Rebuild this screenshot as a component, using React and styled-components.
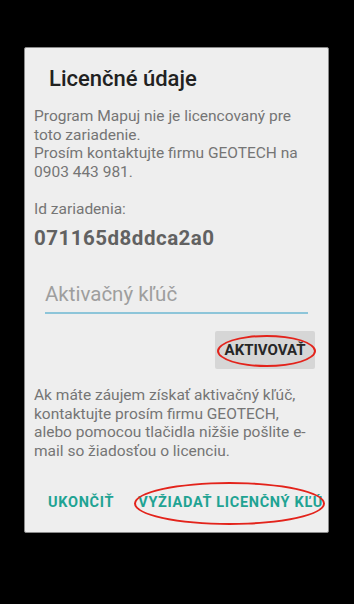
import React from "react";
import styled, { createGlobalStyle } from "styled-components";

const Global = createGlobalStyle`
  html, body { margin: 0; padding: 0; background: #000; }
  body { width: 354px; height: 604px; overflow: hidden; font-family: Roboto, "Noto Sans", sans-serif; }
`;

const Screen = styled.div`
  width: 354px;
  height: 604px;
  background: #000;
  padding: 47px 0 0 24px;
  box-sizing: border-box;
`;

const Dialog = styled.div`
  width: 305px;
  height: 486px;
  box-sizing: border-box;
  background: #eeeeee;
  border: 1px solid #8a8a8a;
  border-radius: 2px;
  display: flex;
  flex-direction: column;
  overflow: hidden;
`;

const Title = styled.h1`
  margin: 0;
  padding: 18px 0 0 24px;
  font-family: Roboto, sans-serif;
  font-weight: 500;
  font-size: 22px;
  line-height: 26px;
  color: #212121;
`;

const Body = styled.div`
  padding: ${(p) => p.$top || 0}px 0 0 9px;
  display: flex;
  flex-direction: column;
`;

const Para = styled.p`
  margin: ${(p) => p.$gap || 0}px 0 0 0;
  font-size: 15.5px;
  line-height: 18.6px;
  color: #757575;
  white-space: nowrap;
`;

const DeviceId = styled.div`
  margin-top: 7px;
  font-size: 20.5px;
  line-height: 24px;
  font-weight: 700;
  letter-spacing: 0.5px;
  color: #616161;
`;

const Field = styled.div`
  margin: 32px 0 0 20px;
  width: 263px;
  border-bottom: 2px solid #8dc5d9;
  padding-bottom: 6.5px;
`;

const Placeholder = styled.div`
  font-size: 20.5px;
  line-height: 24px;
  color: #9e9e9e;
`;

const ActivateRow = styled.div`
  display: flex;
  justify-content: flex-end;
  padding: 16.5px 13px 0 0;
`;

const GrayButton = styled.div`
  position: relative;
  width: 100px;
  height: 38px;
  box-sizing: border-box;
  background: #d6d6d6;
  border-radius: 2px;
  display: flex;
  align-items: center;
  justify-content: center;
  font-size: 15px;
  font-weight: 700;
  color: #262626;
`;

const Mark = styled.div`
  position: absolute;
  box-sizing: border-box;
  border: 2px solid #e3231b;
  border-radius: 50%;
  pointer-events: none;
`;

const Actions = styled.div`
  margin-top: auto;
  display: flex;
  align-items: center;
  padding: 0 0 20px 23px;
  white-space: nowrap;
`;

const TextButton = styled.div`
  position: relative;
  font-size: 14.5px;
  line-height: 18px;
  font-weight: 700;
  letter-spacing: 0.7px;
  color: #1fa393;
  margin-right: ${(p) => p.$mr || 0}px;
  flex: 0 0 auto;
`;

const Clip = styled.span`
  display: block;
  overflow: hidden;
  max-width: 185px;
`;

export default function App() {
  return (
    <>
      <Global />
      <Screen>
        <Dialog>
          <Title>Licenčné údaje</Title>
          <Body $top={15}>
            <Para>
              Program Mapuj nie je licencovaný pre
              <br />
              toto zariadenie.
              <br />
              Prosím kontaktujte firmu GEOTECH na
              <br />
              0903 443 981.
            </Para>
            <Para $gap={18.6}>Id zariadenia:</Para>
            <DeviceId>071165d8ddca2a0</DeviceId>
          </Body>
          <Field>
            <Placeholder>Aktivačný kľúč</Placeholder>
          </Field>
          <ActivateRow>
            <GrayButton>
              AKTIVOVAŤ
              <Mark style={{ left: 2, top: 4, width: 99, height: 32 }} />
            </GrayButton>
          </ActivateRow>
          <Body $top={17.4}>
            <Para>
              Ak máte záujem získať aktivačný kľúč,
              <br />
              kontaktujte prosím firmu GEOTECH,
              <br />
              alebo pomocou tlačidla nižšie pošlite e-
              <br />
              mail so žiadosťou o licenciu.
            </Para>
          </Body>
          <Actions>
            <TextButton $mr={24}>UKONČIŤ</TextButton>
            <TextButton>
              <Clip>VYŽIADAŤ LICENČNÝ KĽÚČ</Clip>
              <Mark style={{ left: -4, top: -12, width: 191, height: 43 }} />
            </TextButton>
          </Actions>
        </Dialog>
      </Screen>
    </>
  );
}
